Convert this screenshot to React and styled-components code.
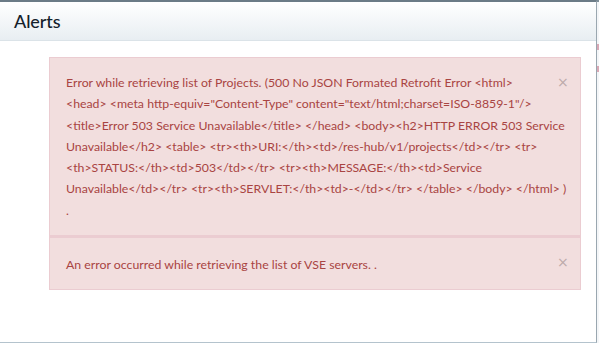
import React from 'react'
import styled, { createGlobalStyle } from 'styled-components'

//----------- Styling ------------------//
const GlobalStyle = createGlobalStyle`
  html, body {
    margin: 0;
    padding: 0;
    background: #ffffff;
    font-family: Lato, "Liberation Sans", sans-serif;
  }
`

const Page = styled.div`
  display: flex;
  width: 599px;
  height: 343px;
  overflow: hidden;
`

const Modal = styled.div`
  width: 597px;
  height: 343px;
  box-sizing: border-box;
  border-top: 2px solid #6b7b86;
  border-right: 1px solid #9aa7b0;
  border-bottom: 1px solid #b4c3cd;
  background: #ffffff;
  display: flex;
  flex-direction: column;
`

const Backdrop = styled.div`
  flex: 1;
  background: linear-gradient(180deg, #7e8e98 0, #7e8e98 2px, #f4f6f8 2px);
  display: flex;
  flex-direction: column;
  padding-top: 44px;
  gap: 16px;
`

const BackdropMark = styled.div`
  height: 6px;
  background: #d9a9b6;
`

const Header = styled.div`
  height: 39px;
  box-sizing: border-box;
  display: flex;
  align-items: center;
  padding: 0 14px;
  background: linear-gradient(180deg, #ffffff 0%, #e8eef2 100%);
  border-bottom: 1px solid #dbe3e8;
`

const Title = styled.h4`
  margin: 0;
  font-size: 18px;
  font-weight: 500;
  color: #14212b;
  letter-spacing: -0.1px;
`

const Body = styled.div`
  padding: 16px 15px 0 49px;
  display: flex;
  flex-direction: column;
`

const Alert = styled.div`
  position: relative;
  background: #f2dede;
  border: 1px solid #ebccd1;
  color: #a94442;
  font-size: 12.3px;
  line-height: 21.3px;
  padding: ${p => (p.$first ? '14px 12px 14px 16px' : '16px 12px 14px 16px')};
  & + & {
    border-top: 2px solid #ebccd1;
  }
`

// keeps the first line clear of the close button
const CloseSpace = styled.span`
  float: right;
  width: 18px;
  height: 14px;
`

const Close = styled.button`
  position: absolute;
  top: 17px;
  right: 13px;
  width: 10px;
  padding: 0;
  border: 0;
  background: none;
  font-size: 14px;
  line-height: 14px;
  color: #bcaaaa;
  font-family: "DejaVu Sans", sans-serif;
  cursor: pointer;
`
//--------------------------------------//

const projectError =
  'Error while retrieving list of Projects. (500 No JSON Formated Retrofit Error <html> <head> <meta http-equiv="Content-Type" content="text/html;charset=ISO-8859-1"/> <title>Error 503 Service Unavailable</title> </head> <body><h2>HTTP ERROR 503 Service Unavailable</h2> <table> <tr><th>URI:</th><td>/res-hub/v1/projects</td></tr> <tr><th>STATUS:</th><td>503</td></tr> <tr><th>MESSAGE:</th><td>Service Unavailable</td></tr> <tr><th>SERVLET:</th><td>-</td></tr> </table> </body> </html> ) .'

const alerts = [
  projectError,
  'An error occurred while retrieving the list of VSE servers. .',
]

export default function App() {
  return (
    <Page>
      <GlobalStyle />
      <Modal>
        <Header>
          <Title>Alerts</Title>
        </Header>
        <Body>
          {alerts.map((text, i) => (
            <Alert $first={i === 0} key={i}>
              <CloseSpace />
              <Close>×</Close>
              {text}
            </Alert>
          ))}
        </Body>
      </Modal>
      <Backdrop>
        <BackdropMark />
        <BackdropMark />
      </Backdrop>
    </Page>
  )
}
